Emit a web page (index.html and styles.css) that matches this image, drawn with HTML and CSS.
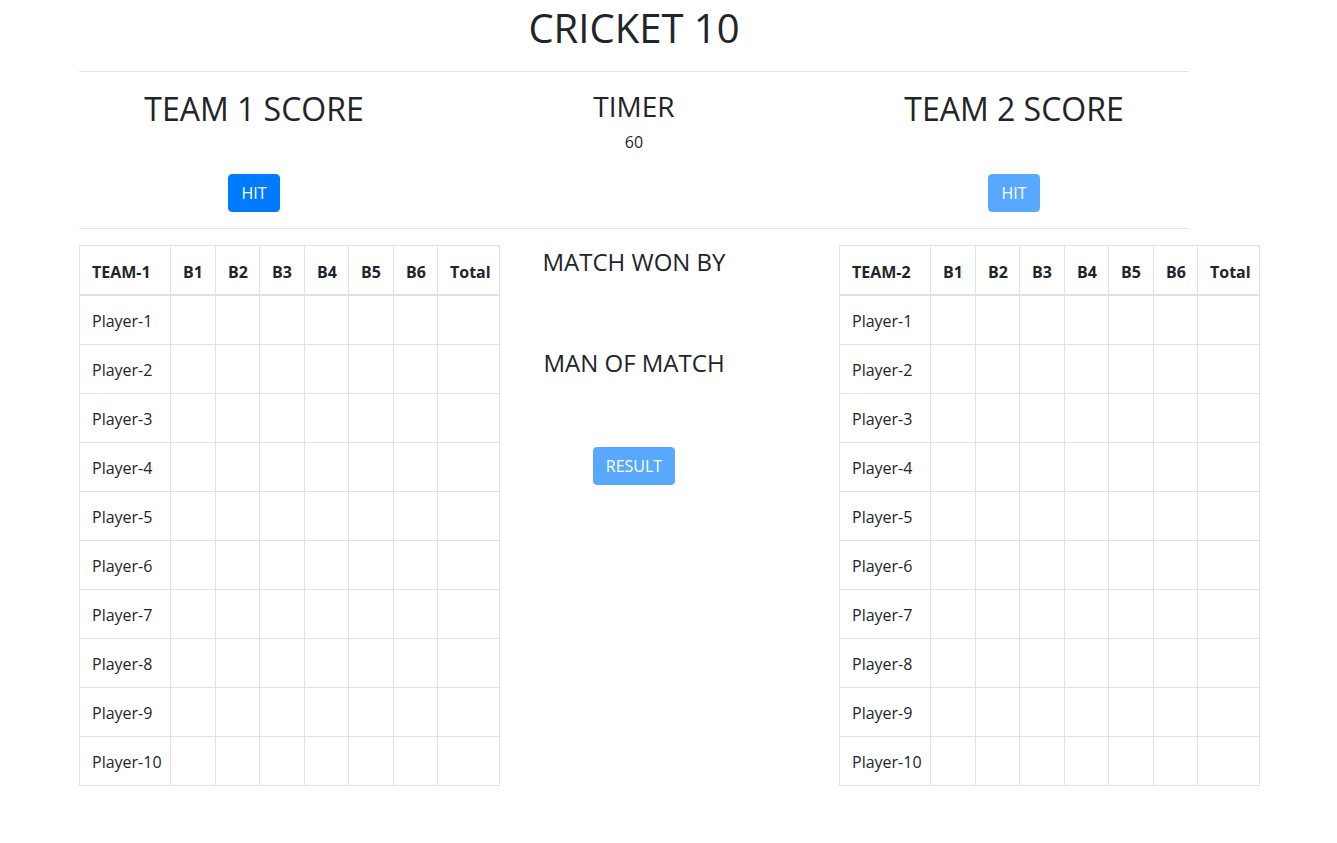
FILE: index.html
```html
<!DOCTYPE html>
<html lang="en">
<head>
<meta charset="utf-8">
<title>Cricket 10</title>
<link rel="stylesheet" href="styles.css">
</head>
<body>
<div class="container">
  <h1 class="title">CRICKET 10</h1>
  <hr class="rule">
  <div class="row top-row">
    <div class="col">
      <h2 class="team-score">TEAM 1 SCORE</h2>
      <button class="btn">HIT</button>
    </div>
    <div class="col">
      <h3 class="timer">TIMER</h3>
      <div class="timer-value">60</div>
    </div>
    <div class="col">
      <h2 class="team-score">TEAM 2 SCORE</h2>
      <button class="btn btn-disabled">HIT</button>
    </div>
  </div>
  <hr class="rule rule-low">
  <div class="row">
    <div class="col">
      <table class="score-table">
        <colgroup><col class="c-name"><col class="c-b"><col class="c-b2"><col class="c-b"><col class="c-b2"><col class="c-b"><col class="c-b2"><col class="c-total"></colgroup>
        <thead><tr><th>TEAM-1</th><th>B1</th><th>B2</th><th>B3</th><th>B4</th><th>B5</th><th>B6</th><th>Total</th></tr></thead>
        <tbody>
          <tr><td>Player-1</td><td></td><td></td><td></td><td></td><td></td><td></td><td></td></tr>
          <tr><td>Player-2</td><td></td><td></td><td></td><td></td><td></td><td></td><td></td></tr>
          <tr><td>Player-3</td><td></td><td></td><td></td><td></td><td></td><td></td><td></td></tr>
          <tr><td>Player-4</td><td></td><td></td><td></td><td></td><td></td><td></td><td></td></tr>
          <tr><td>Player-5</td><td></td><td></td><td></td><td></td><td></td><td></td><td></td></tr>
          <tr><td>Player-6</td><td></td><td></td><td></td><td></td><td></td><td></td><td></td></tr>
          <tr><td>Player-7</td><td></td><td></td><td></td><td></td><td></td><td></td><td></td></tr>
          <tr><td>Player-8</td><td></td><td></td><td></td><td></td><td></td><td></td><td></td></tr>
          <tr><td>Player-9</td><td></td><td></td><td></td><td></td><td></td><td></td><td></td></tr>
          <tr><td>Player-10</td><td></td><td></td><td></td><td></td><td></td><td></td><td></td></tr>
        </tbody>
      </table>
    </div>
    <div class="col center">
      <h4 class="result-head">MATCH WON BY</h4>
      <h4 class="result-head">MAN OF MATCH</h4>
      <button class="btn btn-disabled">RESULT</button>
    </div>
    <div class="col">
      <table class="score-table">
        <colgroup><col class="c-name"><col class="c-b"><col class="c-b2"><col class="c-b"><col class="c-b2"><col class="c-b"><col class="c-b2"><col class="c-total"></colgroup>
        <thead><tr><th>TEAM-2</th><th>B1</th><th>B2</th><th>B3</th><th>B4</th><th>B5</th><th>B6</th><th>Total</th></tr></thead>
        <tbody>
          <tr><td>Player-1</td><td></td><td></td><td></td><td></td><td></td><td></td><td></td></tr>
          <tr><td>Player-2</td><td></td><td></td><td></td><td></td><td></td><td></td><td></td></tr>
          <tr><td>Player-3</td><td></td><td></td><td></td><td></td><td></td><td></td><td></td></tr>
          <tr><td>Player-4</td><td></td><td></td><td></td><td></td><td></td><td></td><td></td></tr>
          <tr><td>Player-5</td><td></td><td></td><td></td><td></td><td></td><td></td><td></td></tr>
          <tr><td>Player-6</td><td></td><td></td><td></td><td></td><td></td><td></td><td></td></tr>
          <tr><td>Player-7</td><td></td><td></td><td></td><td></td><td></td><td></td><td></td></tr>
          <tr><td>Player-8</td><td></td><td></td><td></td><td></td><td></td><td></td><td></td></tr>
          <tr><td>Player-9</td><td></td><td></td><td></td><td></td><td></td><td></td><td></td></tr>
          <tr><td>Player-10</td><td></td><td></td><td></td><td></td><td></td><td></td><td></td></tr>
        </tbody>
      </table>
    </div>
  </div>
</div>
</body>
</html>
```
FILE: styles.css
```css
* { box-sizing: border-box; }
html, body { margin: 0; padding: 0; background: #fff; }
body {
  font-family: "Segoe UI", "Open Sans", "Noto Sans", sans-serif;
  font-size: 16px;
  line-height: 1.5;
  color: #212529;
}
.container {
  width: 1140px;
  padding: 0 15px;
  margin-left: 64px;
}
h1, h2, h3, h4 { margin: 0 0 8px; font-weight: 400; line-height: 1.2; }
.title { font-size: 40px; line-height: 56px; text-align: center; }
.rule {
  margin: 15px 0 18px;
  border: 0;
  border-top: 1px solid rgba(0,0,0,.1);
  height: 0;
}
.rule-low { margin: 16px 0 16px; }
.row { display: flex; margin: 0 -15px; }
.col { width: 380px; flex: 0 0 380px; padding: 0 15px; text-align: center; }
.team-score { font-size: 32px; }
.timer { font-size: 28px; margin-bottom: 6px; }
.timer-value { font-size: 16px; }
.btn {
  display: inline-block;
  font-family: inherit;
  font-size: 16px;
  line-height: 1.5;
  padding: 6px 12px;
  border: 1px solid #007bff;
  border-radius: 4px;
  background: #007bff;
  color: #fff;
  margin-top: 38px;
  vertical-align: top;
}
.btn-disabled { opacity: .65; }
.result-head { font-size: 24px; padding-top: 3px; margin-bottom: 69px; }
.center .btn { margin-top: 0; }
.score-table {
  border-collapse: collapse;
  table-layout: fixed;
  width: 421px;
  text-align: left;
  color: #212529;
}
.c-name { width: 91px; }
.c-b { width: 45px; }
.c-b2 { width: 44px; }
.c-total { width: 62px; }
.score-table th, .score-table td {
  border: 1px solid #dee2e6;
  padding: 13px 12px 11px;
  height: 49px;
  vertical-align: top;
  white-space: nowrap;
  overflow: visible;
}
.score-table th { font-weight: 700; padding-top: 14px; padding-bottom: 9px; }
.score-table thead th { border-bottom: 2px solid #dee2e6; height: 49px; }
```
